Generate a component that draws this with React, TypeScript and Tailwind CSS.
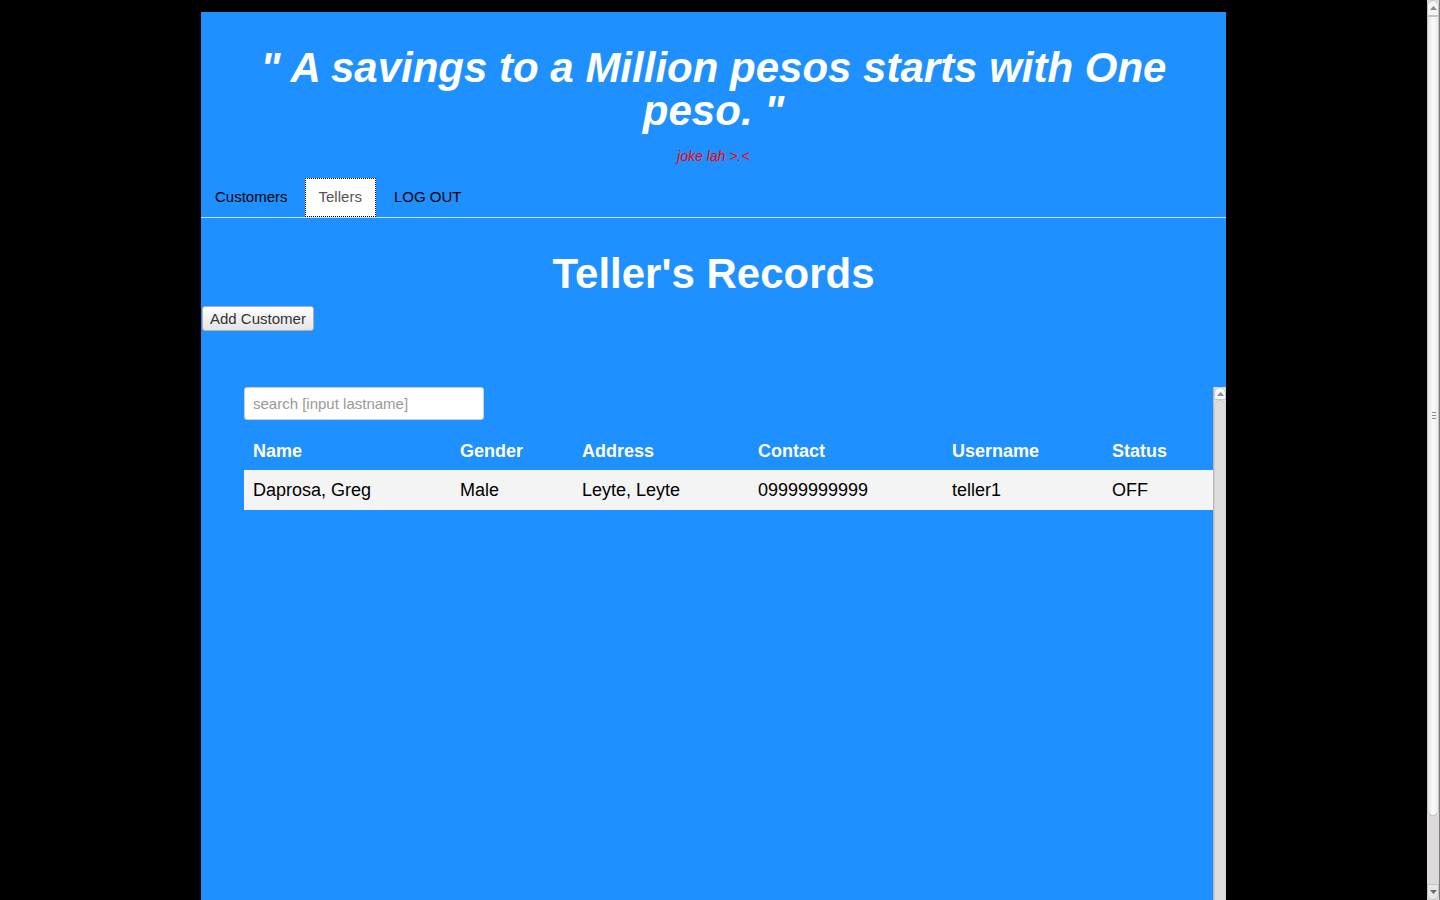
import React from "react";

const tellers = [
  {
    id: 1,
    name: "Daprosa, Greg",
    gender: "Male",
    address: "Leyte, Leyte",
    contact: "09999999999",
    username: "teller1",
    status: "OFF",
  },
];

const columns = [
  { label: "Name", width: "w-[207px]" },
  { label: "Gender", width: "w-[122px]" },
  { label: "Address", width: "w-[176px]" },
  { label: "Contact", width: "w-[194px]" },
  { label: "Username", width: "w-[160px]" },
  { label: "Status", width: "" },
];

function ArrowUp() {
  return (
    <svg width="7" height="4" viewBox="0 0 7 4" className="block">
      <path d="M0 4 L3.5 0 L7 4 Z" fill="#8a8a8a" />
    </svg>
  );
}

function ArrowDown() {
  return (
    <svg width="7" height="4" viewBox="0 0 7 4" className="block">
      <path d="M0 0 L3.5 4 L7 0 Z" fill="#6a6a6a" />
    </svg>
  );
}

function WindowScrollbar() {
  return (
    <div className="flex w-[13px] shrink-0 flex-col border-r border-[#7a7a7a] bg-[#dddbd9]">
      <div className="flex h-[16px] items-center justify-center rounded-t-[6px] border border-[#c4c4c4] bg-[#f4f4f4]">
        <ArrowUp />
      </div>
      <div className="relative h-[800px] rounded-b-[6px] border border-[#c4c4c4] bg-gradient-to-r from-[#e6e6e6] via-[#fafafa] to-[#ececec]">
        <div className="absolute left-[4px] top-[395px] flex flex-col gap-[2px]">
          <span className="block h-px w-[4px] bg-[#8a8a8a]" />
          <span className="block h-px w-[4px] bg-[#8a8a8a]" />
          <span className="block h-px w-[4px] bg-[#8a8a8a]" />
        </div>
      </div>
      <div className="flex-1" />
      <div className="flex h-[16px] items-center justify-center rounded-b-[6px] border border-[#c4c4c4] bg-[#e8e8e8]">
        <ArrowDown />
      </div>
    </div>
  );
}

function PanelScrollbar() {
  return (
    <div className="flex w-[13px] shrink-0 flex-col border-l border-[#b8b8b8] bg-[#dfdddb]">
      <div className="flex h-[13px] items-center justify-center rounded-t-[6px] border border-[#c8c8c8] bg-[#f6f6f6]">
        <ArrowUp />
      </div>
      <div className="flex-1 rounded-t-[6px] border-x border-t border-[#cfcfcf] bg-[#dfdddb]" />
    </div>
  );
}

export default function App() {
  return (
    <div className="flex h-screen overflow-hidden bg-black font-['Liberation_Sans',Arial,sans-serif]">
      <div className="flex flex-1 justify-center pt-[12px]">
        <div className="flex w-[1025px] flex-col bg-[#1e90ff]">
          <header className="pt-[34px] text-center">
            <h1 className="text-[42px] font-bold italic leading-[43px] text-white">
              " A savings to a Million pesos starts with One
              <br />
              peso. "
            </h1>
            <p className="mt-[16px] text-[14px] italic leading-[16px] text-[#ff0000]">
              joke lah &gt;.&lt;
            </p>
          </header>

          <nav className="mt-[14px] flex h-[40px] gap-[3px] border-b border-[#cfe5ff] text-[15px]">
            <a className="flex items-center px-[14px] text-black">Customers</a>
            <a className="flex items-center border border-dotted border-black bg-white px-[13px] text-[#555]">
              Tellers
            </a>
            <a className="flex items-center pl-[15px] pr-[14px] text-black">LOG OUT</a>
          </nav>

          <h2 className="mt-[30px] text-center text-[42px] font-bold leading-[52px] text-white">
            Teller's Records
          </h2>

          <div className="mt-[6px] pl-px">
            <button className="h-[25px] rounded-[3px] border border-[#b0b0b0] bg-gradient-to-b from-white to-[#e4e4e4] px-[7px] text-[15px] leading-[23px] text-[#333]">
              Add Customer
            </button>
          </div>

          <div className="mt-[56px] flex flex-1">
            <div className="flex-1 pl-[43px]">
              <input
                placeholder="search [input lastname]"
                className="h-[33px] w-[240px] rounded-[3px] border border-[#cccccc] bg-white px-[8px] text-[15px] text-[#333] outline-none placeholder:text-[#999]"
              />
              <table className="mt-[12px] w-full border-collapse text-left text-[18px]">
                <thead>
                  <tr className="h-[38px]">
                    {columns.map((col) => (
                      <th key={col.label} className={`${col.width} px-[9px] font-bold text-white`}>
                        {col.label}
                      </th>
                    ))}
                  </tr>
                </thead>
                <tbody>
                  {tellers.map((t) => (
                    <tr key={t.id} className="h-[40px] bg-[#f4f4f4] text-black">
                      <td className="px-[9px]">{t.name}</td>
                      <td className="px-[9px]">{t.gender}</td>
                      <td className="px-[9px]">{t.address}</td>
                      <td className="px-[9px]">{t.contact}</td>
                      <td className="px-[9px]">{t.username}</td>
                      <td className="px-[9px]">{t.status}</td>
                    </tr>
                  ))}
                </tbody>
              </table>
            </div>
            <PanelScrollbar />
          </div>
        </div>
      </div>
      <WindowScrollbar />
    </div>
  );
}
